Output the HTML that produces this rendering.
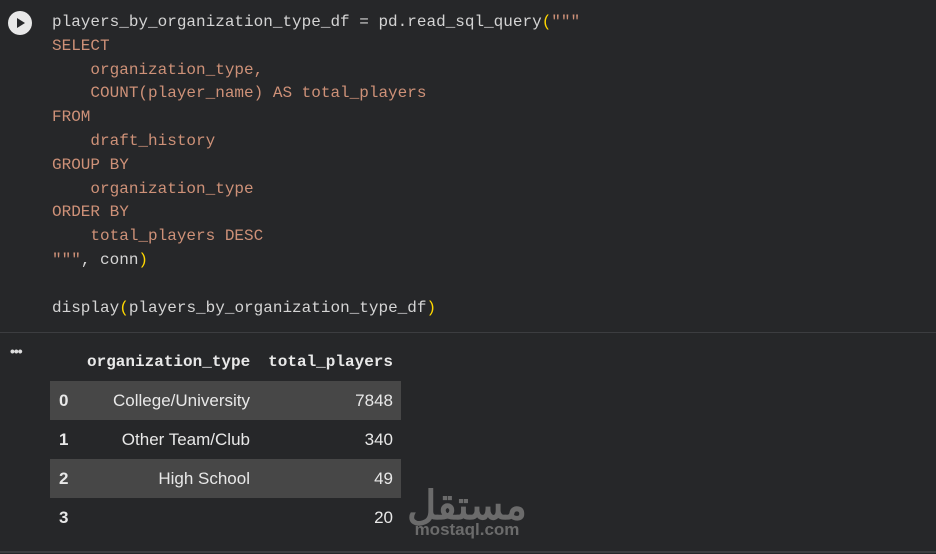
<!DOCTYPE html>
<html><head><style>
body{margin:0;width:936px;height:554px;background:#262729;overflow:hidden;position:relative;font-family:"Liberation Sans",sans-serif}
.code{position:absolute;left:52px;top:11px;font:16px/23.8px "Liberation Mono",monospace;color:#d4d4d4;white-space:pre;margin:0}
.s{color:#ce9178}.y{color:#ffd700}
.run{position:absolute;left:8px;top:11px;width:24px;height:24px;border-radius:50%;background:#e8e8e8}
.run:after{content:"";position:absolute;left:9px;top:7px;border-left:8px solid #262729;border-top:5px solid transparent;border-bottom:5px solid transparent}
.sep{position:absolute;left:0;right:0;top:332px;height:1px;background:#3c3d40}
.sep2{position:absolute;left:0;right:0;top:551px;height:2px;background:#3c3d40}
.dots{position:absolute;left:10px;top:343px;color:#ddd;font-size:14px;font-weight:bold;letter-spacing:-1px}
table{position:absolute;left:50px;top:342px;border-collapse:collapse;color:#e8e8e8;font-size:17px;table-layout:fixed;width:351px}
th{font:bold 16px "Liberation Mono",monospace;height:39px;text-align:right;padding:0 8px}
td{height:39px;padding:0 8px;text-align:right}
td.i{font-weight:bold;text-align:left;padding:0 0 0 9px}
tr.g td{background:#474747}
.wm{position:absolute;left:405px;top:484px;color:#6b6b6b;text-align:center;width:124px}
</style></head><body>
<div class="run"></div>
<pre class="code">players_by_organization_type_df = pd.read_sql_query<span class="y">(</span><span class="s">"""
SELECT
    organization_type,
    COUNT(player_name) AS total_players
FROM
    draft_history
GROUP BY
    organization_type
ORDER BY
    total_players DESC
"""</span>, conn<span class="y">)</span>

display<span class="y">(</span>players_by_organization_type_df<span class="y">)</span></pre>
<div class="sep"></div>
<div class="dots">•••</div>
<table>
<colgroup><col style="width:29px"><col style="width:179px"><col style="width:143px"></colgroup>
<tr><th></th><th>organization_type</th><th>total_players</th></tr>
<tr class="g"><td class="i">0</td><td>College/University</td><td>7848</td></tr>
<tr><td class="i">1</td><td>Other Team/Club</td><td>340</td></tr>
<tr class="g"><td class="i">2</td><td>High School</td><td>49</td></tr>
<tr><td class="i">3</td><td></td><td>20</td></tr>
</table>
<div class="wm"><div style="font:bold 40px/36px 'Noto Sans CJK SC',sans-serif">مستقل</div><div style="font:bold 17px 'Liberation Sans',sans-serif">mostaql.com</div></div>
<div class="sep2"></div>
</body></html>
